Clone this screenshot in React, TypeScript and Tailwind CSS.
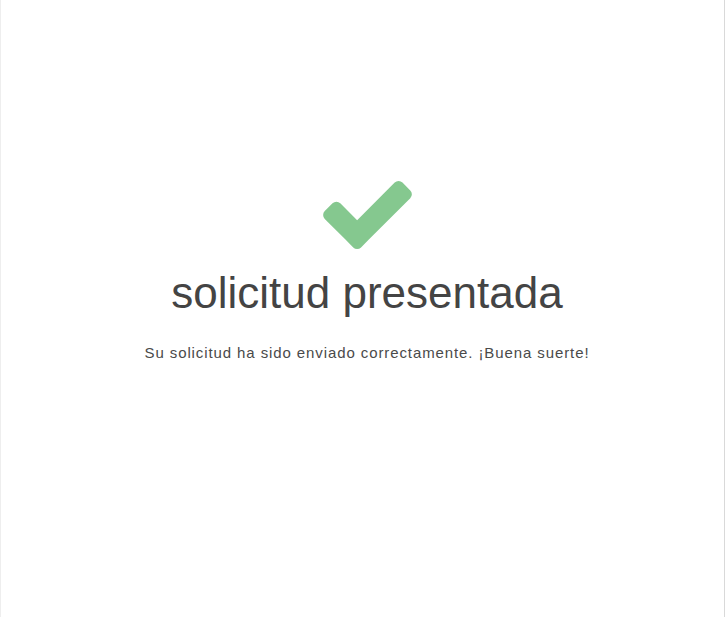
import React from "react";

// Check glyph, same outline as the classic icon-font "check"
const CheckIcon = () => (
  <svg
    viewBox="121 334 1550 1188"
    className="w-[89px] h-[68px]"
    aria-hidden="true"
  >
    <path
      fill="#85c88f"
      d="M1671 566q0 40-28 68l-724 724-136 136q-28 28-68 28t-68-28l-136-136-362-362q-28-28-28-68t28-68l136-136q28-28 68-28t68 28l294 295 656-657q28-28 68-28t68 28l136 136q28 28 28 68z"
    />
  </svg>
);

export default function App() {
  return (
    <div className="h-[617px] w-full bg-white border-l border-l-[#eeeeee] border-r border-r-[#d9d9d9] font-['Liberation_Sans',Arial,sans-serif]">
      <div className="flex flex-col items-center pt-[181px] pl-[9px]">
        <CheckIcon />
        <h1 className="mt-[20px] text-[44px] leading-[48px] font-normal text-[#444444]">
          solicitud presentada
        </h1>
        <p className="mt-[26px] text-[15px] leading-[20px] tracking-[0.9px] text-[#4a4a4a]">
          Su solicitud ha sido enviado correctamente. ¡Buena suerte!
        </p>
      </div>
    </div>
  );
}
